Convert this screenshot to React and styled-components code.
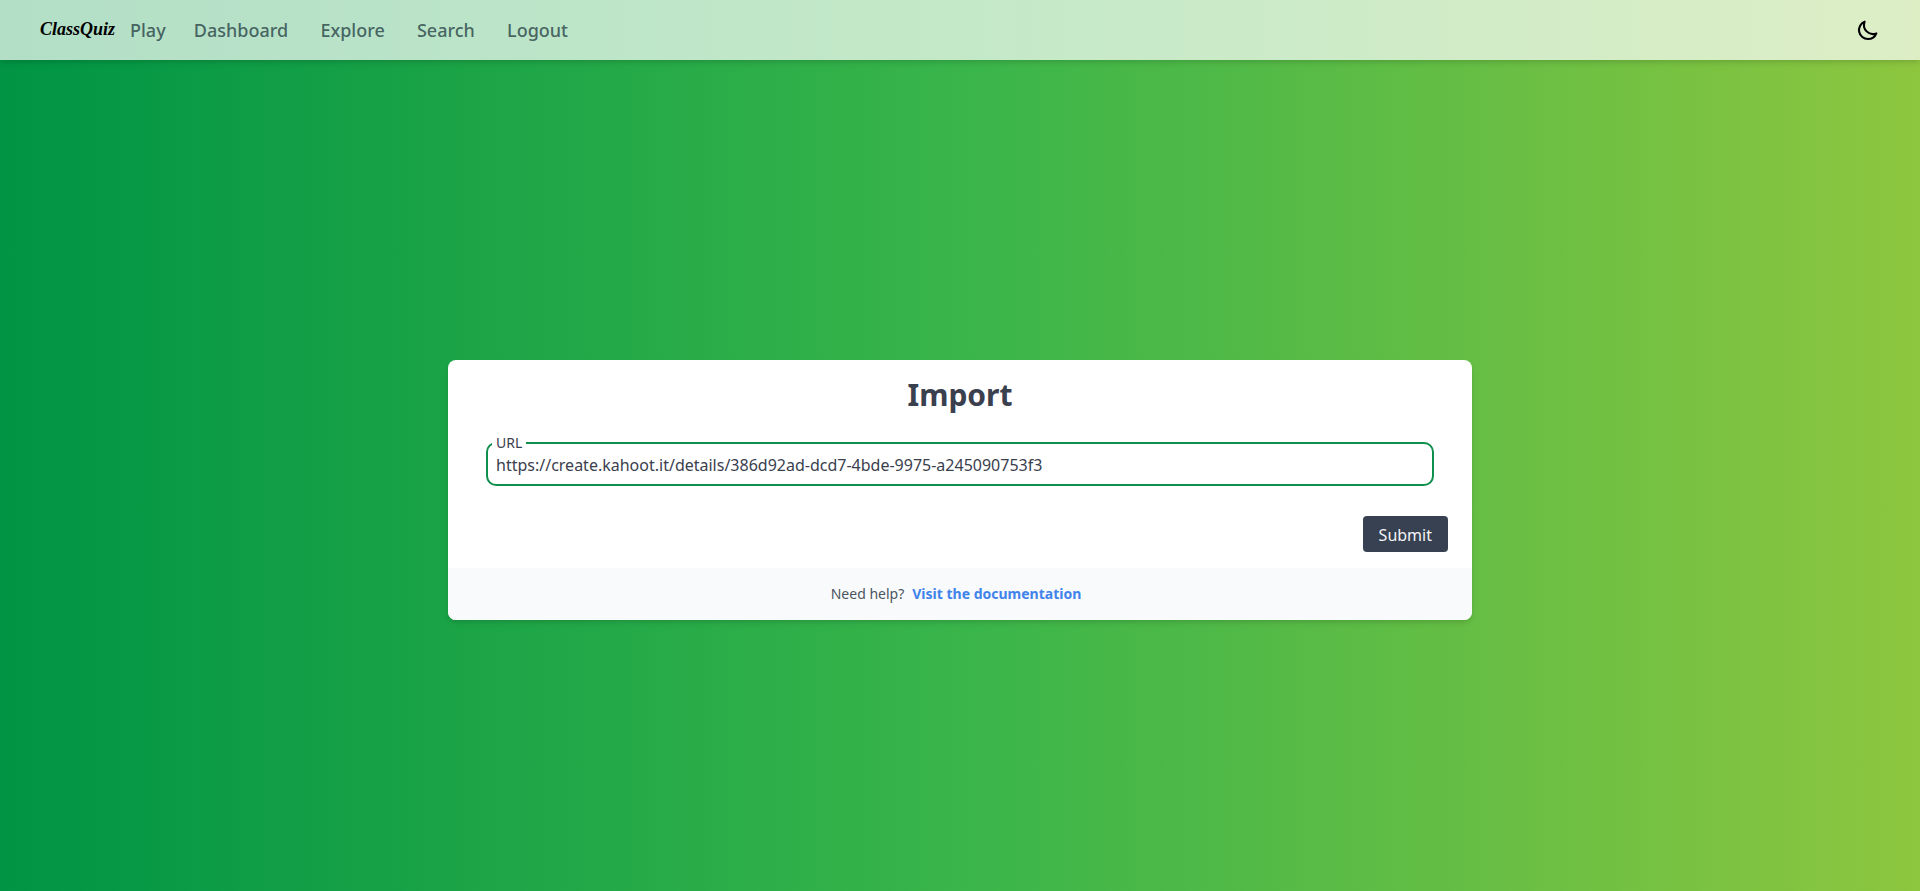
import React from 'react';
import styled, { createGlobalStyle } from 'styled-components';

const GlobalStyle = createGlobalStyle`
  *, *::before, *::after { box-sizing: border-box; }
  body {
    margin: 0;
    font-family: 'Noto Sans', sans-serif;
    font-size: 16px;
    line-height: 24px;
    color: #3a404e;
  }
`;

const Page = styled.div`
  min-height: 100vh;
  display: flex;
  flex-direction: column;
  background: linear-gradient(to right, #009444, #39b54a, #8dc63f);
`;

const Navbar = styled.nav`
  height: 60px;
  flex: none;
  display: flex;
  align-items: center;
  padding: 0 40px;
  background: rgba(255, 255, 255, 0.7);
  box-shadow: 0 4px 6px -1px rgba(0, 0, 0, 0.1), 0 2px 4px -1px rgba(0, 0, 0, 0.06);
`;

const Brand = styled.a`
  width: 78px;
  margin-right: 12px;
  padding-bottom: 3px;
  font-family: 'Liberation Serif', serif;
  font-style: italic;
  font-weight: 700;
  font-size: 18px;
  white-space: nowrap;
  color: #000;
`;

const NavLinks = styled.div`
  display: flex;
  flex: 1;
  gap: 32.2px;
`;

const NavLink = styled.a`
  font-size: 18px;
  line-height: 28px;
  font-weight: 500;
  color: rgba(40, 66, 70, 0.8);
  &:first-child { margin-right: -4px; }
`;

const ThemeToggle = styled.button`
  display: flex;
  padding: 0;
  border: 0;
  background: none;
  color: #000;
`;

const Main = styled.main`
  flex: 1;
  display: flex;
  align-items: center;
  justify-content: center;
  padding-top: 29px;
`;

const Card = styled.section`
  width: 1024px;
  height: 260px;
  display: flex;
  flex-direction: column;
  overflow: hidden;
  border-radius: 8px;
  background: #fff;
  box-shadow: 0 4px 6px -1px rgba(0, 0, 0, 0.1), 0 2px 4px -1px rgba(0, 0, 0, 0.06);
`;

const Form = styled.form`
  flex: 1;
  display: flex;
  flex-direction: column;
  padding: 17px 24px 16px;
`;

const Title = styled.h1`
  margin: 0;
  text-align: center;
  font-size: 30px;
  line-height: 36px;
  font-weight: 700;
`;

const Field = styled.fieldset`
  min-width: 0;
  height: 53px;
  margin: 20px 14px 0;
  padding: 0 8px;
  border: 2px solid #0f8f4c;
  border-radius: 10px;
`;

const Legend = styled.legend`
  margin-left: -4px;
  padding: 0 4px;
  font-size: 14px;
  line-height: 20px;
`;

const UrlInput = styled.input`
  display: block;
  width: 100%;
  height: 24px;
  padding: 0;
  border: 0;
  outline: 0;
  background: transparent;
  font: inherit;
  color: inherit;
`;

const SubmitButton = styled.button`
  align-self: flex-end;
  height: 36px;
  margin-top: auto;
  padding: 2px 16px 0;
  border: 0;
  border-radius: 4px;
  background: #374151;
  color: #f3f4f6;
  font: inherit;
`;

const CardFooter = styled.footer`
  height: 52px;
  display: flex;
  align-items: center;
  justify-content: center;
  gap: 8px;
  padding-right: 8px;
  background: #f9fafb;
  font-size: 14px;
  line-height: 20px;
  color: #4b5563;
`;

const DocsLink = styled.a`
  font-weight: 700;
  color: #4083ea;
`;

const links = ['Play', 'Dashboard', 'Explore', 'Search', 'Logout'];

export default function App() {
  return (
    <>
      <GlobalStyle />
      <Page>
        <Navbar>
          <Brand>ClassQuiz</Brand>
          <NavLinks>
            {links.map((label) => (
              <NavLink key={label}>{label}</NavLink>
            ))}
          </NavLinks>
          <ThemeToggle type="button" aria-label="Toggle theme">
            <svg width="24" height="24" viewBox="0 0 24 24" fill="none" stroke="currentColor" strokeWidth="2.1" strokeLinecap="round" strokeLinejoin="round">
              <path d="M20.354 15.354A9 9 0 018.646 3.646 9.003 9.003 0 0012 21a9.003 9.003 0 008.354-5.646z" />
            </svg>
          </ThemeToggle>
        </Navbar>
        <Main>
          <Card>
            <Form>
              <Title>Import</Title>
              <Field>
                <Legend>URL</Legend>
                <UrlInput
                  aria-label="URL"
                  defaultValue="https://create.kahoot.it/details/386d92ad-dcd7-4bde-9975-a245090753f3"
                />
              </Field>
              <SubmitButton type="button">Submit</SubmitButton>
            </Form>
            <CardFooter>
              <span>Need help?</span>
              <DocsLink>Visit the documentation</DocsLink>
            </CardFooter>
          </Card>
        </Main>
      </Page>
    </>
  );
}
